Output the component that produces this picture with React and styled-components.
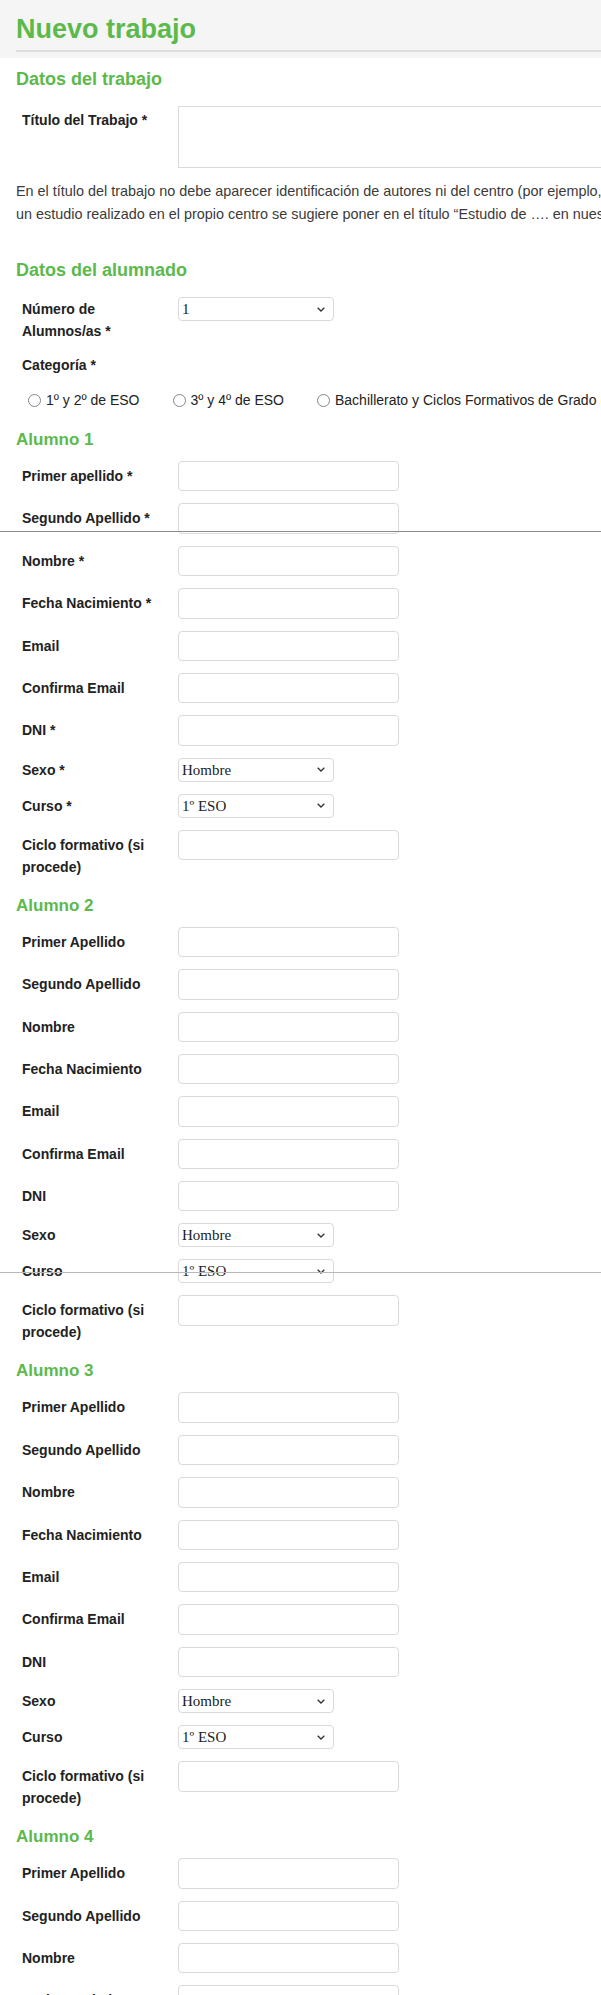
import React from "react";
import styled, { createGlobalStyle } from "styled-components";

const GREEN = "#5cb94b";

const chevron =
  "data:image/svg+xml;utf8," +
  encodeURIComponent(
    '<svg xmlns="http://www.w3.org/2000/svg" width="8" height="5" viewBox="0 0 8 5"><path d="M0.7 0.7 L4 4 L7.3 0.7" fill="none" stroke="#333" stroke-width="1.3"/></svg>'
  );

const GlobalStyle = createGlobalStyle`
  html, body {
    margin: 0;
    padding: 0;
    background: #ffffff;
    overflow-x: hidden;
  }
  body {
    font-family: "Liberation Sans", Arial, sans-serif;
    color: #222222;
  }
`;

const Page = styled.div`
  position: relative;
  width: 960px;
`;

const Header = styled.header`
  background-color: #f5f5f5;
  padding: 13px 16px 6px;
`;

const PageTitle = styled.h1`
  margin: 0;
  padding-bottom: 5px;
  border-bottom: 2px solid #dddddd;
  font-size: 27px;
  line-height: 32px;
  font-weight: bold;
  color: ${GREEN};
`;

const Main = styled.main`
  padding: 0 16px;
`;

const SectionTitle = styled.h2`
  margin: ${(p) => (p.$first ? "10px" : "33px")} 0 16px;
  font-size: 18px;
  line-height: 22px;
  font-weight: bold;
  color: ${GREEN};
`;

const StudentTitle = styled.h3`
  margin: 18px 0 11px;
  font-size: 17px;
  line-height: 20px;
  font-weight: bold;
  color: ${GREEN};
`;

const Row = styled.div`
  display: flex;
  align-items: flex-start;
  margin-bottom: 12px;
`;

const Label = styled.label`
  flex-shrink: 0;
  width: 150px;
  margin-right: 6px;
  padding: ${(p) => p.$top}px 0 0 6px;
  font-size: 14px;
  line-height: 22px;
  font-weight: bold;
  color: #222222;
`;

const TextInput = styled.input`
  box-sizing: border-box;
  width: 221px;
  height: 30.4px;
  border: 1px solid #dadada;
  border-radius: 4px;
  background: #ffffff;
  padding: 0 6px;
  font: 14px "Liberation Sans", Arial, sans-serif;
`;

const TitleArea = styled.textarea`
  box-sizing: border-box;
  width: 540px;
  height: 62px;
  border: 1px solid #dadada;
  background: #ffffff;
  resize: none;
  font: 14px "Liberation Sans", Arial, sans-serif;
`;

const Select = styled.select`
  box-sizing: border-box;
  appearance: none;
  width: 156px;
  height: 24px;
  border: 1px solid #dadada;
  border-radius: 4px;
  background: #ffffff url("${chevron}") no-repeat right 8px center;
  padding: 0 20px 0 3px;
  font: 15px "Liberation Serif", "Times New Roman", serif;
  color: #222222;
`;

const Note = styled.p`
  margin: 0;
  font-size: 14.4px;
  line-height: 23px;
  color: #3a3a3a;
  white-space: nowrap;
`;

const RadioGroup = styled.div`
  display: flex;
  align-items: center;
  height: 24px;
  margin: 12px 0 12px;
  padding-left: 12px;
`;

const RadioOption = styled.label`
  display: flex;
  align-items: center;
  gap: 5px;
  margin-right: 33px;
  font-size: 14px;
  color: #222222;
  white-space: nowrap;
`;

const Radio = styled.input`
  appearance: none;
  margin: 0;
  width: 13px;
  height: 13px;
  border: 1px solid #858585;
  border-radius: 50%;
  background: #ffffff;
`;

const Seam = styled.div`
  position: absolute;
  left: 0;
  right: 0;
  top: ${(p) => p.$y}px;
  height: 1px;
  background: ${(p) => p.$color};
`;

const courses = ["1º ESO", "2º ESO", "3º ESO", "4º ESO", "1º Bachillerato", "2º Bachillerato"];

function Field({ label, kind = "text" }) {
  if (kind === "select-sex") {
    return (
      <Row>
        <Label $top={1}>{label}</Label>
        <Select defaultValue="Hombre">
          <option>Hombre</option>
          <option>Mujer</option>
        </Select>
      </Row>
    );
  }
  if (kind === "select-course") {
    return (
      <Row>
        <Label $top={1}>{label}</Label>
        <Select defaultValue="1º ESO">
          {courses.map((c) => (
            <option key={c}>{c}</option>
          ))}
        </Select>
      </Row>
    );
  }
  return (
    <Row>
      <Label $top={4}>{label}</Label>
      <TextInput type="text" />
    </Row>
  );
}

function Student({ n }) {
  const req = n === 1 ? " *" : "";
  return (
    <section>
      <StudentTitle>Alumno {n}</StudentTitle>
      <Field label={n === 1 ? "Primer apellido *" : "Primer Apellido"} />
      <Field label={"Segundo Apellido" + req} />
      <Field label={"Nombre" + req} />
      <Field label={"Fecha Nacimiento" + req} />
      <Field label="Email" />
      <Field label="Confirma Email" />
      <Field label={"DNI" + req} />
      <Field label={"Sexo" + req} kind="select-sex" />
      <Field label={"Curso" + req} kind="select-course" />
      <Field label="Ciclo formativo (si procede)" />
    </section>
  );
}

export default function App() {
  return (
    <Page>
      <GlobalStyle />
      <Header>
        <PageTitle>Nuevo trabajo</PageTitle>
      </Header>
      <Main>
        <SectionTitle $first>Datos del trabajo</SectionTitle>
        <Row>
          <Label $top={3}>Título del Trabajo *</Label>
          <TitleArea />
        </Row>
        <Note>
          En el título del trabajo no debe aparecer identificación de autores ni del centro (por ejemplo, si se trata de
          <br />
          un estudio realizado en el propio centro se sugiere poner en el título “Estudio de …. en nuestro centro educativo”).
        </Note>

        <SectionTitle>Datos del alumnado</SectionTitle>
        <Row>
          <Label $top={1}>Número de Alumnos/as *</Label>
          <Select defaultValue="1">
            <option>1</option>
            <option>2</option>
            <option>3</option>
            <option>4</option>
          </Select>
        </Row>
        <Row>
          <Label $top={0}>Categoría *</Label>
        </Row>
        <RadioGroup>
          <RadioOption>
            <Radio type="radio" name="categoria" />
            1º y 2º de ESO
          </RadioOption>
          <RadioOption>
            <Radio type="radio" name="categoria" />
            3º y 4º de ESO
          </RadioOption>
          <RadioOption>
            <Radio type="radio" name="categoria" />
            Bachillerato y Ciclos Formativos de Grado Medio
          </RadioOption>
        </RadioGroup>

        {[1, 2, 3, 4].map((n) => (
          <Student key={n} n={n} />
        ))}
      </Main>
      <Seam $y={531} $color="#8c8c8c" />
      <Seam $y={1272} $color="#b8b8b8" />
    </Page>
  );
}
